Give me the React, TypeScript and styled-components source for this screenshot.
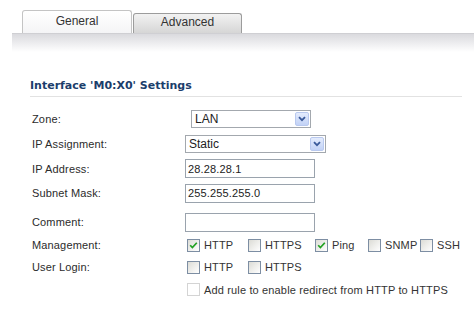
import React from "react"
import styled, { createGlobalStyle } from "styled-components"

const GlobalStyle = createGlobalStyle`
    html, body {
        margin: 0;
        padding: 0;
        background: #ffffff;
    }
    body {
        font-family: 'Liberation Sans', Arial, sans-serif;
        font-size: 11px;
        letter-spacing: 0.15px;
        color: #2b2b2b;
    }
`

const Page = styled.div`
    width: 474px;
    height: 310px;
    overflow: hidden;
    padding-top: 10px;
    box-sizing: border-box;
`

const TabStrip = styled.div`
    display: flex;
    align-items: flex-end;
    padding-left: 22px;
    height: 23px;
`

const Tab = styled.div<{ $active?: boolean }>`
    width: ${p => p.$active ? 110 : 109}px;
    height: ${p => p.$active ? 23 : 20}px;
    box-sizing: border-box;
    margin-left: ${p => p.$active ? 0 : 1}px;
    border: 1px solid ${p => p.$active ? '#c4c4c4' : '#9c9c9c'};
    border-bottom: none;
    border-radius: 3px 3px 0 0;
    background: ${p => p.$active
        ? 'linear-gradient(#ffffff, #f4f4f6)'
        : 'linear-gradient(#f2f2f2, #d6d6d6)'};
    display: flex;
    align-items: center;
    justify-content: center;
    padding-bottom: 3px;
    font-size: 12px;
    letter-spacing: 0;
    color: #333333;
`

const TabBar = styled.div`
    margin-left: 12px;
    height: 18px;
    border-top: 1px solid #cfcfd3;
    background: linear-gradient(#dadade, #ffffff);
`

const Section = styled.div`
    padding: 27px 12px 0 30px;
`

const Title = styled.div`
    font-family: 'DejaVu Sans', Verdana, sans-serif;
    font-weight: bold;
    font-size: 11px;
    letter-spacing: 0;
    color: #1b3d6b;
    padding-bottom: 4px;
    border-bottom: 1px solid #e2e2e2;
`

const Form = styled.div`
    display: flex;
    flex-direction: column;
    padding-top: 10px;
    padding-left: 2px;
`

const Row = styled.div<{ $h: number; $mt?: number }>`
    display: flex;
    align-items: center;
    height: ${p => p.$h}px;
    margin-top: ${p => p.$mt || 0}px;
`

const Label = styled.div`
    width: 153px;
    flex-shrink: 0;
`

const Control = styled.div<{ $indent?: number }>`
    display: flex;
    align-items: center;
    padding-left: ${p => p.$indent || 0}px;
`

const TextBox = styled.div`
    width: 130px;
    height: 19px;
    box-sizing: border-box;
    border: 1px solid #9aa3ad;
    padding-left: 2px;
    display: flex;
    align-items: center;
    font-size: 11px;
    color: #222222;
    background: #ffffff;
`

const SelectBox = styled.div<{ $w: number }>`
    width: ${p => p.$w}px;
    height: 18px;
    box-sizing: border-box;
    border: 1px solid #a3a8ae;
    padding: 0 1px 0 3px;
    display: flex;
    align-items: center;
    justify-content: space-between;
    font-size: 12px;
    letter-spacing: 0;
    color: #222222;
    background: #ffffff;
`

const Arrow = styled.div`
    width: 14px;
    height: 14px;
    box-sizing: border-box;
    border: 1px solid #b9c9ef;
    border-radius: 2px;
    background: linear-gradient(#e4ecfd, #c2d2f6);
    display: flex;
    align-items: center;
    justify-content: center;
`

const Check = styled.label<{ $w?: number }>`
    display: flex;
    align-items: center;
    width: ${p => p.$w ? `${p.$w}px` : 'auto'};
    color: #333333;
`

const Box = styled.span<{ $disabled?: boolean }>`
    width: 13px;
    height: 13px;
    box-sizing: border-box;
    border: 1px solid ${p => p.$disabled ? '#d4d4d4' : '#7d8ea3'};
    background: ${p => p.$disabled ? '#ffffff' : 'linear-gradient(135deg, #dcdcd6, #ffffff)'};
    display: flex;
    align-items: center;
    justify-content: center;
    margin-right: 4px;
    flex-shrink: 0;
`

const CheckText = styled.span`
    font-size: 11px;
`

const ChevronDown = () => (
    <svg width="8" height="6" viewBox="0 0 8 6">
        <path d="M1 1.2 L4 4.2 L7 1.2" fill="none" stroke="#3a5a9a" strokeWidth="1.8" />
    </svg>
)

const Tick = () => (
    <svg width="9" height="9" viewBox="0 0 9 9">
        <path d="M1.2 4.2 L3.4 6.6 L7.8 1.8" fill="none" stroke="#21a121" strokeWidth="1.7" />
    </svg>
)

const CheckItem: React.FC<{ label: string; checked?: boolean; disabled?: boolean; w?: number }> = ({ label, checked, disabled, w }) => (
    <Check $w={w}>
        <Box $disabled={disabled}>{checked && <Tick />}</Box>
        <CheckText>{label}</CheckText>
    </Check>
)

const App: React.FC = () => {
    return (
        <Page>
            <GlobalStyle />
            <TabStrip>
                <Tab $active>General</Tab>
                <Tab>Advanced</Tab>
            </TabStrip>
            <TabBar />
            <Section>
                <Title>Interface 'M0:X0' Settings</Title>
                <Form>
                    <Row $h={24}>
                        <Label>Zone:</Label>
                        <Control $indent={6}>
                            <SelectBox $w={120}>LAN<Arrow><ChevronDown /></Arrow></SelectBox>
                        </Control>
                    </Row>
                    <Row $h={25}>
                        <Label>IP Assignment:</Label>
                        <Control>
                            <SelectBox $w={141}>Static<Arrow><ChevronDown /></Arrow></SelectBox>
                        </Control>
                    </Row>
                    <Row $h={25}>
                        <Label>IP Address:</Label>
                        <Control><TextBox>28.28.28.1</TextBox></Control>
                    </Row>
                    <Row $h={24}>
                        <Label>Subnet Mask:</Label>
                        <Control><TextBox>255.255.255.0</TextBox></Control>
                    </Row>
                    <Row $h={24} $mt={5}>
                        <Label>Comment:</Label>
                        <Control><TextBox /></Control>
                    </Row>
                    <Row $h={22}>
                        <Label>Management:</Label>
                        <Control $indent={2}>
                            <CheckItem label="HTTP" checked w={61} />
                            <CheckItem label="HTTPS" w={67} />
                            <CheckItem label="Ping" checked w={53} />
                            <CheckItem label="SNMP" w={52} />
                            <CheckItem label="SSH" />
                        </Control>
                    </Row>
                    <Row $h={22}>
                        <Label>User Login:</Label>
                        <Control $indent={2}>
                            <CheckItem label="HTTP" w={61} />
                            <CheckItem label="HTTPS" />
                        </Control>
                    </Row>
                    <Row $h={23}>
                        <Label />
                        <Control $indent={2}>
                            <CheckItem label="Add rule to enable redirect from HTTP to HTTPS" disabled />
                        </Control>
                    </Row>
                </Form>
            </Section>
        </Page>
    )
}

export default App
